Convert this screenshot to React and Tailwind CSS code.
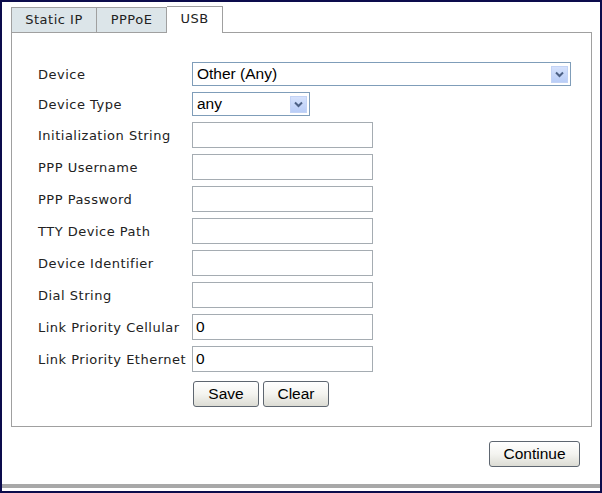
import React from "react";

const label = "font-['DejaVu_Sans',Verdana,sans-serif] text-[13px] tracking-[0.5px] text-[#222]";
const field = "font-['Liberation_Sans',Arial,sans-serif] text-[15.5px] text-black";

function Arrow() {
  return (
    <div className="w-[17px] h-[17px] bg-gradient-to-b from-[#d6e2fc] to-[#b9cdf7] border border-[#c3d3f5] flex items-center justify-center">
      <svg width="9" height="7" viewBox="0 0 9 7">
        <path d="M1 1.5 L4.5 5 L8 1.5" fill="none" stroke="#4d6185" strokeWidth="2" />
      </svg>
    </div>
  );
}

function Select({ value, w }) {
  return (
    <div className={`h-[24px] ${w} border border-[#7f9db9] bg-white flex items-center justify-between pl-[4px] pr-[2px]`}>
      <span className={field}>{value}</span>
      <Arrow />
    </div>
  );
}

function Input({ value = "" }) {
  return (
    <div className="h-[26px] w-[181px] border border-[#a5acb2] bg-white flex items-center pl-[3px]">
      <span className={field}>{value}</span>
    </div>
  );
}

function Btn({ children, w }) {
  return (
    <div className={`h-[26px] ${w} rounded-[3px] border border-[#5e6670] bg-gradient-to-b from-white via-[#f4f4f0] to-[#dcdcd4] flex items-center justify-center ${field}`}>
      {children}
    </div>
  );
}

export default function App() {
  const rows = [
    ["Initialization String", ""],
    ["PPP Username", ""],
    ["PPP Password", ""],
    ["TTY Device Path", ""],
    ["Device Identifier", ""],
    ["Dial String", ""],
    ["Link Priority Cellular", "0"],
    ["Link Priority Ethernet", "0"],
  ];
  return (
    <div className="w-[602px] h-[493px] bg-white border-2 border-[#0c0c4c] flex flex-col overflow-hidden">
      <div className="flex items-end pl-[9px] pt-[3px] h-[30px]">
        <div className={`h-[25px] w-[86px] bg-[#dce5e9] border border-b-0 border-[#a0a0a0] flex items-center justify-center ${label}`}>Static IP</div>
        <div className={`h-[25px] w-[70px] bg-[#dce5e9] border border-l-0 border-b-0 border-[#a0a0a0] flex items-center justify-center ${label}`}>PPPoE</div>
        <div className={`h-[27px] w-[56px] bg-white border border-l-0 border-b-0 border-[#a0a0a0] flex items-center justify-center pb-[2px] ${label} relative z-10 -mb-px`}>USB</div>
      </div>
      <div className="ml-[9px] mr-[8px] h-[395px] border border-[#a0a0a0] pl-[26px] pt-[29px]">
        <div className="flex items-center h-[24px]">
          <div className={`w-[154px] pt-[2px] ${label}`}>Device</div>
          <Select value="Other (Any)" w="w-[379px]" />
        </div>
        <div className="flex items-center h-[24px] mt-[6px]">
          <div className={`w-[154px] pt-[2px] ${label}`}>Device Type</div>
          <Select value="any" w="w-[118px]" />
        </div>
        {rows.map(([l, v]) => (
          <div key={l} className="flex items-center h-[26px] mt-[6px]">
            <div className={`w-[154px] pt-[2px] whitespace-nowrap ${label}`}>{l}</div>
            <Input value={v} />
          </div>
        ))}
        <div className="flex mt-[9px] pl-[155px] gap-[4px]">
          <Btn w="w-[66px]">Save</Btn>
          <Btn w="w-[66px]">Clear</Btn>
        </div>
      </div>
      <div className="flex justify-end pr-[20px] mt-[14px]">
        <Btn w="w-[91px]">Continue</Btn>
      </div>
      <div className="mt-auto h-[4px] bg-[#a8a8a8] mb-[3px]" />
    </div>
  );
}
